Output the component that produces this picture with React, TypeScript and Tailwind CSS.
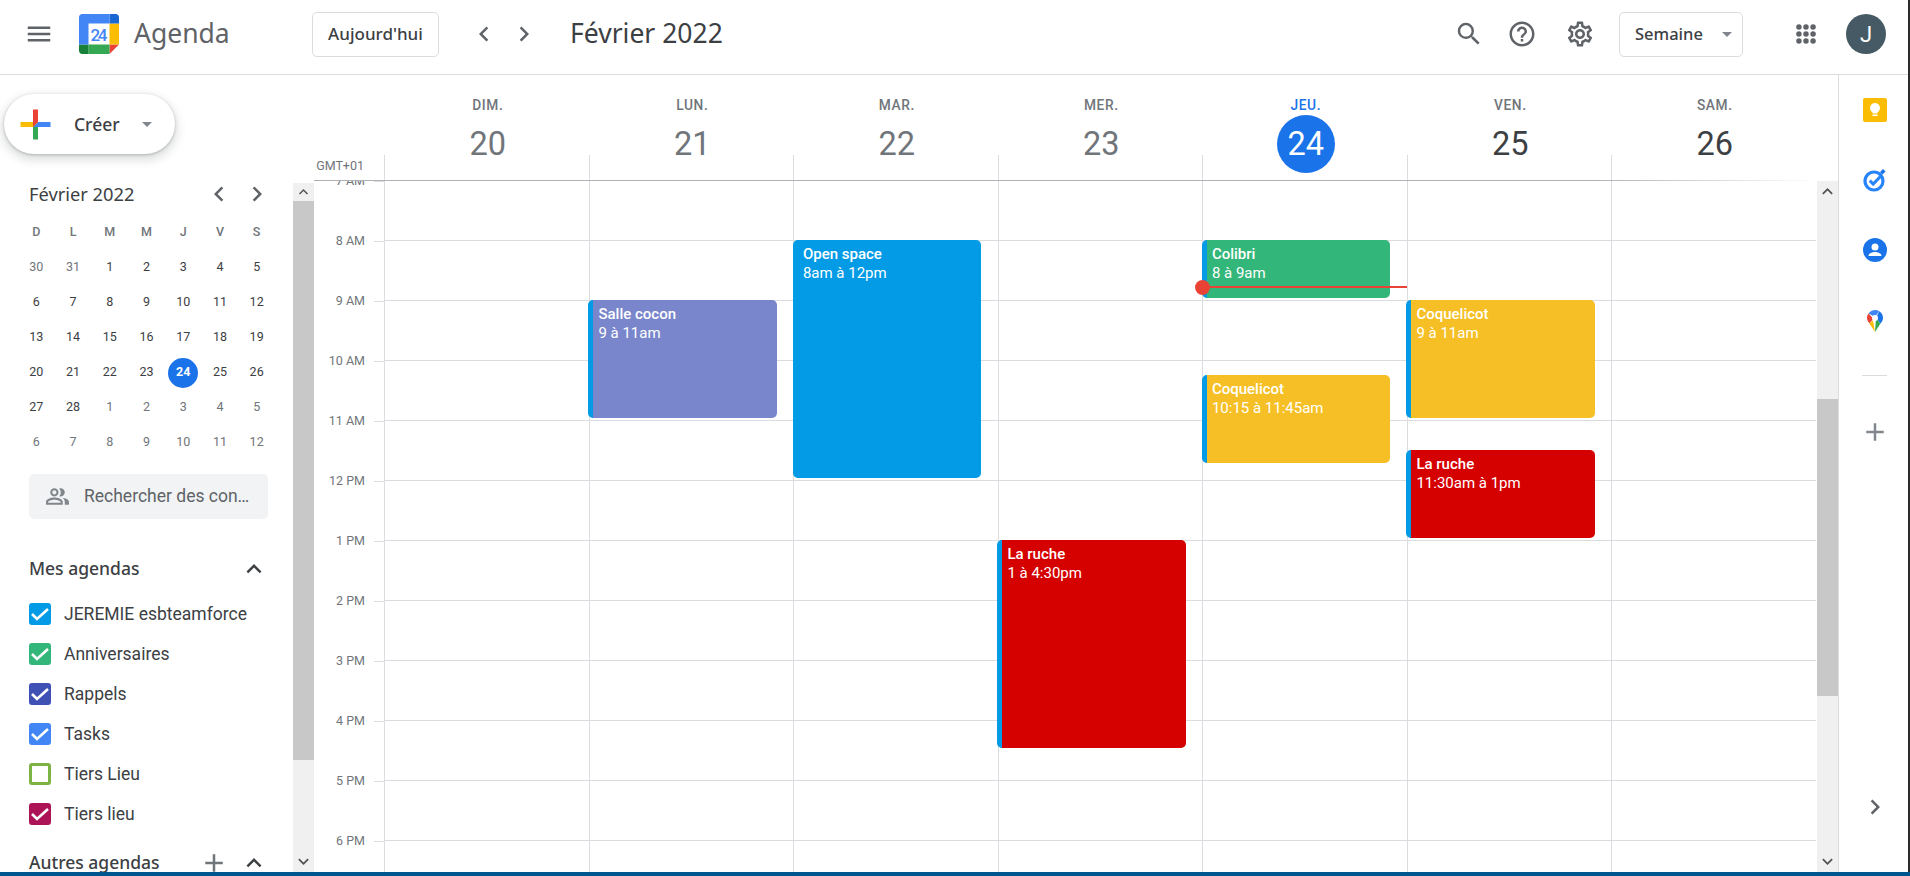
import {
  MdAdd,
  MdChevronLeft,
  MdChevronRight,
  MdExpandLess,
  MdExpandMore,
  MdHelpOutline,
  MdMenu,
  MdOutlinePeopleAlt,
  MdOutlineSettings,
  MdSearch,
} from "react-icons/md";

const days = [
  { name: "DIM.", num: 20 },
  { name: "LUN.", num: 21 },
  { name: "MAR.", num: 22 },
  { name: "MER.", num: 23 },
  { name: "JEU.", num: 24, today: true },
  { name: "VEN.", num: 25, future: true },
  { name: "SAM.", num: 26, future: true },
];

const hours = ["7 AM", "8 AM", "9 AM", "10 AM", "11 AM", "12 PM", "1 PM", "2 PM", "3 PM", "4 PM", "5 PM", "6 PM"];

const events = [
  { day: 1, title: "Salle cocon", time: "9 à 11am", top: 119, height: 118, color: "bg-[#7986cb]" },
  { day: 2, title: "Open space", time: "8am à 12pm", top: 59, height: 238, color: "bg-[#039be5]" },
  { day: 3, title: "La ruche", time: "1 à 4:30pm", top: 359, height: 208, color: "bg-[#d50000]" },
  { day: 4, title: "Colibri", time: "8 à 9am", top: 59, height: 58, color: "bg-[#33b679]" },
  { day: 4, title: "Coquelicot", time: "10:15 à 11:45am", top: 194, height: 88, color: "bg-[#f6bf26]" },
  { day: 5, title: "Coquelicot", time: "9 à 11am", top: 119, height: 118, color: "bg-[#f6bf26]" },
  { day: 5, title: "La ruche", time: "11:30am à 1pm", top: 269, height: 88, color: "bg-[#d50000]" },
];

const weekLetters = ["D", "L", "M", "M", "J", "V", "S"];
const miniDays = [
  30, 31, 1, 2, 3, 4, 5, 6, 7, 8, 9, 10, 11, 12, 13, 14, 15, 16, 17, 18, 19, 20, 21, 22, 23, 24, 25, 26, 27, 28, 1, 2, 3,
  4, 5, 6, 7, 8, 9, 10, 11, 12,
];

const calendars = [
  { label: "JEREMIE esbteamforce", color: "bg-[#039be5] border-[#039be5]", checked: true },
  { label: "Anniversaires", color: "bg-[#33b679] border-[#33b679]", checked: true },
  { label: "Rappels", color: "bg-[#3f51b5] border-[#3f51b5]", checked: true },
  { label: "Tasks", color: "bg-[#4285f4] border-[#4285f4]", checked: true },
  { label: "Tiers Lieu", color: "bg-white border-[#7cb342]", checked: false },
  { label: "Tiers lieu", color: "bg-[#ad1457] border-[#ad1457]", checked: true },
];

function CalendarLogo() {
  return (
    <svg width="40" height="40" viewBox="0 0 40 40">
      <path d="M30.5 9.5H9.5v21h21z" fill="#fff" />
      <path d="M30.5 40 40 30.5h-9.5z" fill="#ea4335" />
      <path d="M40 9.5h-9.5v21H40z" fill="#fbbc04" />
      <path d="M30.5 30.5h-21V40h21z" fill="#34a853" />
      <path d="M0 30.5v6.3C0 38.6 1.4 40 3.2 40h6.3v-9.5z" fill="#188038" />
      <path d="M40 9.5V3.2C40 1.4 38.6 0 36.8 0h-6.3v9.5z" fill="#1967d2" />
      <path d="M30.5 0H3.2C1.4 0 0 1.4 0 3.2v27.3h9.5v-21h21z" fill="#4285f4" />
      <text x="20" y="26.5" textAnchor="middle" fontSize="17" fill="#4285f4" fontFamily="Roboto, sans-serif" fontWeight="500" textLength="17">
        24
      </text>
    </svg>
  );
}

function CreatePlus() {
  return (
    <svg width="45" height="45" viewBox="0 0 36 36">
      <path fill="#34a853" d="M16 16v14h4V20z" />
      <path fill="#4285f4" d="M30 16H20l-4 4h14z" />
      <path fill="#fbbc05" d="M6 16v4h10l4-4z" />
      <path fill="#ea4335" d="M20 16V6h-4v14z" />
    </svg>
  );
}

function AppsDots() {
  const pos = [3, 10.25, 17.5];
  return (
    <svg width="20" height="20" viewBox="0 0 20.5 20.5">
      {pos.map((y) => pos.map((x) => <circle key={`${x}-${y}`} cx={x} cy={y} r="2.8" fill="#5f6368" />))}
    </svg>
  );
}

function KeepIcon() {
  return (
    <svg width="24" height="24" viewBox="0 0 24 24">
      <rect width="24" height="24" rx="2" fill="#fbbc04" />
      <circle cx="12" cy="10" r="5" fill="#fff" />
      <rect x="9.5" y="13" width="5" height="2.5" fill="#fff" />
      <rect x="9.5" y="16.5" width="5" height="1.5" fill="#fff" />
    </svg>
  );
}

function TasksIcon() {
  return (
    <svg width="24" height="24" viewBox="0 0 24 24">
      <circle cx="11" cy="13" r="9" fill="none" stroke="#2684fc" strokeWidth="3.2" />
      <path d="m6.8 12.6 3.4 3.4 8.4-8.8" fill="none" stroke="#2684fc" strokeWidth="3" />
      <path d="m17 4 3-3 2.5 2.5-3 3z" fill="#1a73e8" />
    </svg>
  );
}

function ContactsIcon() {
  return (
    <svg width="24" height="24" viewBox="0 0 24 24">
      <circle cx="12" cy="12" r="12" fill="#1a73e8" />
      <circle cx="12" cy="9" r="3.5" fill="#fff" />
      <path d="M5.5 18c0-3 4-4 6.500-4s6.500 1 6.500 4z" fill="#fff" />
    </svg>
  );
}

function MapsIcon() {
  return (
    <svg width="16" height="22" viewBox="0 0 16 22">
      <path d="M8 22 13.500 13.500 9 8z" fill="#34a853" />
      <path d="M8 22 2.300 13.200 6 10.500z" fill="#fbbc04" />
      <path d="M2.300 13.200C1 11.500 0 10 0 8c0-1.700.5-3.300 1.600-4.500L6.500 9z" fill="#ea4335" />
      <path d="M1.600 3.500C3 1.300 5.500 0 8 0c1.500 0 3 .4 4.200 1.200L8 7z" fill="#4285f4" />
      <path d="M12.200 1.200C14.500 2.600 16 5 16 8c0 2-1 3.700-2.500 5.500L9 8z" fill="#1a73e8" />
      <circle cx="8" cy="8" r="3" fill="#fff" />
    </svg>
  );
}

function Header() {
  return (
    <header className="flex h-[75px] shrink-0 items-center border-b border-[#dadce0] bg-white pb-[6px]">
      <div className="flex w-[312px] items-center">
        <MdMenu className="ml-[24px] text-[30px] text-[#5f6368]" />
        <div className="ml-[25px]">
          <CalendarLogo />
        </div>
        <span className="ml-[15px] text-[26.5px] text-[#5f6368] [font-family:'Noto_Sans',sans-serif]">Agenda</span>
      </div>
      <button className="h-[45px] w-[127px] rounded-[5px] border border-[#dadce0] text-[17px] font-medium text-[#3c4043] [font-family:'Noto_Sans',sans-serif]">
        Aujourd'hui
      </button>
      <MdChevronLeft className="ml-[30px] text-[30px] text-[#5f6368]" />
      <MdChevronRight className="ml-[10px] text-[30px] text-[#5f6368]" />
      <h1 className="ml-[31px] text-[26.5px] text-[#3c4043] [font-family:'Noto_Sans',sans-serif]">Février 2022</h1>
      <div className="ml-auto flex items-center">
        <MdSearch className="text-[30px] text-[#5f6368]" />
        <MdHelpOutline className="ml-[23px] text-[30px] text-[#5f6368]" />
        <MdOutlineSettings className="ml-[28px] text-[30px] text-[#5f6368]" />
        <div className="ml-[24px] flex h-[45px] w-[124px] items-center rounded-[5px] border border-[#dadce0] pl-[15px]">
          <span className="text-[16.500px] font-medium text-[#3c4043] [font-family:'Noto_Sans',sans-serif]">Semaine</span>
          <span className="ml-[19px] h-0 w-0 border-x-[5px] border-t-[5px] border-x-transparent border-t-[#80868b]" />
        </div>
        <div className="ml-[53px]">
          <AppsDots />
        </div>
        <div className="ml-[30px] mr-[22px] flex h-[40px] w-[40px] items-center justify-center rounded-full bg-[#455a64] text-[22px] text-white">
          J
        </div>
      </div>
    </header>
  );
}

function MiniCalendar() {
  return (
    <div className="pl-[18px]">
      <div className="flex h-[30px] items-center pl-[11px]">
        <span className="text-[18.300px] text-[#3c4043] [font-family:'Noto_Sans',sans-serif]">Février 2022</span>
        <MdChevronLeft className="ml-auto text-[30px] text-[#5f6368]" />
        <MdChevronRight className="mr-[21px] ml-[8px] text-[30px] text-[#5f6368]" />
      </div>
      <div className="mt-[6px] grid w-[257px] grid-cols-7">
        {weekLetters.map((letter, i) => (
          <div key={i} className="flex h-[35px] items-center justify-center text-[12.500px] font-medium text-[#70757a]">
            {letter}
          </div>
        ))}
        {miniDays.map((d, i) => {
          const outside = i < 2 || i >= 30;
          const today = i === 25;
          return (
            <div key={i} className="flex h-[35px] items-center justify-center">
              <span
                className={`flex h-[30px] w-[30px] items-center justify-center rounded-full text-[12.500px] ${
                  today ? "bg-[#1a73e8] font-bold text-white" : outside ? "text-[#70757a] [font-weight:450]" : "text-[#3c4043] [font-weight:450]"
                }`}
              >
                {d}
              </span>
            </div>
          );
        })}
      </div>
    </div>
  );
}

function Sidebar() {
  return (
    <aside className="flex w-[314px] shrink-0">
      <div className="w-[293px] overflow-hidden">
        <button className="mt-[19px] ml-[4px] flex h-[60px] w-[171px] items-center rounded-full bg-white pl-[9px] shadow-[0_1px_3px_rgba(60,64,67,0.3),0_4px_8px_3px_rgba(60,64,67,0.15)]">
          <CreatePlus />
          <span className="ml-[16px] text-[17.500px] font-medium text-[#3c4043] [font-family:'Noto_Sans',sans-serif]">Créer</span>
          <span className="ml-[22px] h-0 w-0 border-x-[5px] border-t-[5px] border-x-transparent border-t-[#80868b]" />
        </button>
        <div className="mt-[25px]">
          <MiniCalendar />
        </div>
        <div className="mt-[13.500px] ml-[29px] flex h-[45px] w-[239px] items-center rounded-[5px] bg-[#f1f3f4] pl-[16px] text-[17.500px] text-[#5f6368]">
          <MdOutlinePeopleAlt className="shrink-0 text-[25px] text-[#80868b]" />
          <span className="ml-[14px] truncate pr-[18px]">Rechercher des contacts</span>
        </div>
        <div className="mt-[35px] flex h-[30px] items-center pl-[29px] pr-[24px]">
          <span className="text-[17.500px] font-medium text-[#3c4043] [font-family:'Noto_Sans',sans-serif]">Mes agendas</span>
          <MdExpandLess className="ml-auto text-[30px] text-[#3c4043]" />
        </div>
        <ul className="mt-[10px]">
          {calendars.map((c) => (
            <li key={c.label} className="flex h-[40px] items-center pl-[29px]">
              <span className={`flex h-[22px] w-[22px] items-center justify-center rounded-[3px] border-[3px] ${c.color}`}>
                {c.checked && (
                  <svg width="16" height="16" viewBox="0 0 16 16" className="shrink-0 overflow-visible">
                    <path d="m0 8 5 5 11-10" fill="none" stroke="#fff" strokeWidth="2.600" />
                  </svg>
                )}
              </span>
              <span className="mt-[2px] ml-[13px] whitespace-nowrap text-[17.500px] text-[#3c4043]">{c.label}</span>
            </li>
          ))}
        </ul>
        <div className="mt-[14px] flex h-[30px] items-center pl-[29px] pr-[24px]">
          <span className="text-[17.500px] font-medium text-[#3c4043] [font-family:'Noto_Sans',sans-serif]">Autres agendas</span>
          <MdAdd className="ml-auto text-[30px] text-[#70757a]" />
          <MdExpandLess className="ml-[10px] text-[30px] text-[#3c4043]" />
        </div>
      </div>
      <div className="mt-[108px] flex w-[21px] flex-col bg-[#f0f0f0]">
        <MdExpandLess className="h-[18px] w-[21px] text-[#505050]" />
        <div className="h-[559px] bg-[#c8c8c8]" />
        <MdExpandMore className="mt-auto h-[21px] w-[21px] text-[#505050]" />
      </div>
    </aside>
  );
}

function DayHeader() {
  return (
    <div className="flex h-[106px] shrink-0 flex-col">
      <div className="relative flex flex-1">
        <span className="absolute bottom-[4px] left-0 w-[50px] text-right text-[12.500px] text-[#70757a]">GMT+01</span>
        <div className="ml-[70px] grid grid-cols-[repeat(7,204.5px)]">
          {days.map((d) => (
            <div key={d.name} className="relative flex flex-col items-center pt-[20px] pl-[3px]">
              <span
                className={`h-[20px] text-[13.750px] leading-[20px] font-medium tracking-[0.6px] ${
                  d.today ? "text-[#1a73e8]" : "text-[#70757a]"
                }`}
              >
                {d.name}
              </span>
              <span
                className={`flex h-[58px] w-[58px] items-center justify-center rounded-full text-[32.500px] ${
                  d.today ? "bg-[#1a73e8] text-white" : d.future ? "text-[#3c4043]" : "text-[#70757a]"
                }`}
              >
                {d.num}
              </span>
              <span className="absolute bottom-0 left-0 h-[25px] w-px bg-[#dadce0]" />
            </div>
          ))}
        </div>
      </div>
      <div className="h-px bg-linear-to-r from-[#aeb1b5] via-[#aeb1b5] via-85% to-white" />
    </div>
  );
}

function WeekGrid() {
  return (
    <div className="flex min-h-0 flex-1 overflow-hidden">
      <div className="w-[70px] shrink-0">
        <div className="-mt-[10px]">
          {hours.map((h) => (
            <div key={h} className="flex h-[60px]">
              <span className="h-[20px] w-[51px] text-right text-[12.500px] leading-[20px] text-[#70757a]">{h}</span>
              <span className="mt-[10px] ml-[9px] h-px w-[10px] bg-[#dadce0]" />
            </div>
          ))}
        </div>
      </div>
      <div className="grid grid-cols-[repeat(7,204.5px)]">
        {days.map((d, i) => (
          <div key={d.name} className="relative border-l border-[#dadce0]">
            {hours.map((h) => (
              <div key={h} className="h-[60px] border-b border-[#dadce0]" />
            ))}
            {events
              .filter((e) => e.day === i)
              .map((e) => (
                <div
                  key={e.title + e.time}
                  style={{ top: e.top, height: e.height }}
                  className={`absolute left-[-1.1px] w-[188.500px] overflow-hidden rounded-[5px] border-l-[5px] border-[#039be5] pt-[5px] pl-[5px] text-[15px] leading-[19px] text-white ${e.color}`}
                >
                  <div className="font-medium">{e.title}</div>
                  <div>{e.time}</div>
                </div>
              ))}
            {d.today && (
              <div className="absolute top-[105px] left-[-1px] flex w-[205px] items-center">
                <span className="absolute -left-[7.500px] h-[15px] w-[15px] rounded-full bg-[#ea4335]" />
                <span className="h-[2px] w-full bg-[#ea4335]" />
              </div>
            )}
          </div>
        ))}
      </div>
    </div>
  );
}

function RightPanel() {
  return (
    <div className="flex w-[70px] shrink-0 flex-col items-center border-l border-[#dadce0] pt-[23px] pl-[2px]">
      <KeepIcon />
      <div className="mt-[46px]">
        <TasksIcon />
      </div>
      <div className="mt-[46px]">
        <ContactsIcon />
      </div>
      <div className="mt-[48px]">
        <MapsIcon />
      </div>
      <div className="mt-[43px] h-px w-[25px] bg-[#dadce0]" />
      <MdAdd className="mt-[41px] text-[30px] text-[#80868b]" />
      <MdChevronRight className="mt-auto mb-[50px] text-[30px] text-[#5f6368]" />
    </div>
  );
}

export default function App() {
  return (
    <div className="flex h-[876px] w-[1910px] flex-col overflow-hidden bg-white [font-family:Roboto,sans-serif]">
      <div className="flex min-h-0 flex-1">
        <div className="flex min-w-0 flex-1 flex-col">
          <Header />
          <div className="flex min-h-0 flex-1">
            <Sidebar />
            <main className="flex min-w-0 flex-1 flex-col">
              <DayHeader />
              <WeekGrid />
            </main>
            <div className="mt-[106px] flex w-[21px] shrink-0 flex-col bg-[#f0f0f0]">
              <MdExpandLess className="h-[21px] w-[21px] text-[#505050]" />
              <div className="mt-[197px] h-[297px] bg-[#c8c8c8]" />
              <MdExpandMore className="mt-auto h-[21px] w-[21px] text-[#505050]" />
            </div>
            <RightPanel />
          </div>
        </div>
        <div className="w-[2px] shrink-0 bg-[#2b2b2b]" />
      </div>
      <div className="h-[4px] shrink-0 bg-[#00578f]" />
    </div>
  );
}
